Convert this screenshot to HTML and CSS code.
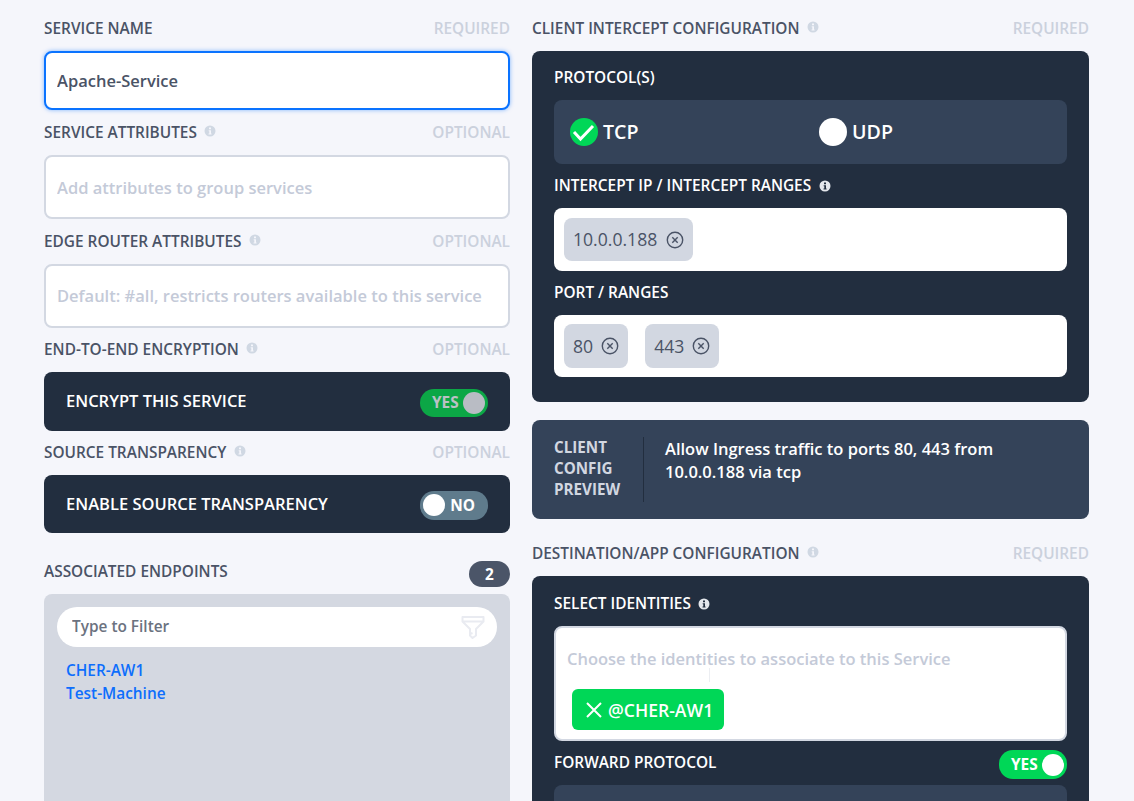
FILE: index.html
```html
<!DOCTYPE html>
<html lang="en">
<head>
<meta charset="utf-8">
<title>Service</title>
<link rel="stylesheet" href="styles.css">
</head>
<body>
<svg class="defs" width="0" height="0" aria-hidden="true">
  <symbol id="info" viewBox="0 0 12 12">
    <path fill="currentColor" fill-rule="evenodd" d="M6 .5a5.500 5.500 0 1 1 0 11 5.500 5.500 0 0 1 0-11ZM5 2.600h2v1.700H5ZM4.700 5.200H7v3.300h.6v1H4.500v-1h.8V6.200h-.6Z"/>
  </symbol>
  <symbol id="xc" viewBox="0 0 18 18">
    <circle cx="9" cy="9" r="7.700" fill="none" stroke="currentColor" stroke-width="1.400"/>
    <path d="M6.300 6.300l5.400 5.400M11.700 6.300l-5.400 5.400" fill="none" stroke="currentColor" stroke-width="1.400"/>
  </symbol>
</svg>
<main class="page">
  <section class="col col-left">
    <div class="label-row"><span class="label">SERVICE NAME</span><span class="hint">REQUIRED</span></div>
    <input class="field field-focus" type="text" value="Apache-Service">

    <div class="label-row lr-a"><span class="label">SERVICE ATTRIBUTES<svg class="info"><use href="#info"/></svg></span><span class="hint">OPTIONAL</span></div>
    <input class="field field-tall" type="text" placeholder="Add attributes to group services">

    <div class="label-row lr-a"><span class="label">EDGE ROUTER ATTRIBUTES<svg class="info"><use href="#info"/></svg></span><span class="hint">OPTIONAL</span></div>
    <input class="field field-tall field-up" type="text" placeholder="Default: #all, restricts routers available to this service">

    <div class="label-row lr-e"><span class="label">END-TO-END ENCRYPTION<svg class="info"><use href="#info"/></svg></span><span class="hint">OPTIONAL</span></div>
    <div class="dark-row">
      <span class="dark-text">ENCRYPT THIS SERVICE</span>
      <span class="toggle toggle-dim"><b>YES</b><i class="knob"></i></span>
    </div>

    <div class="label-row lr-b"><span class="label">SOURCE TRANSPARENCY<svg class="info"><use href="#info"/></svg></span><span class="hint">OPTIONAL</span></div>
    <div class="dark-row dark-row-b">
      <span class="dark-text">ENABLE SOURCE TRANSPARENCY</span>
      <span class="toggle toggle-off"><i class="knob"></i><b>NO</b></span>
    </div>

    <div class="label-row lr-c"><span class="label label-up">ASSOCIATED ENDPOINTS</span><span class="count">2</span></div>
    <div class="endpoints">
      <div class="filter">
        <input class="filter-input" type="text" placeholder="Type to Filter">
        <svg class="funnel" viewBox="0 0 24 25" width="24" height="25"><path d="M1.500 2h21v4.500L15 14v6.500L11.500 23 9 20.500V14L1.500 6.500ZM1.500 6.500h21M9 19l2.500-1" fill="none" stroke="currentColor" stroke-width="2" stroke-linejoin="round"/></svg>
      </div>
      <a class="endpoint" href="#">CHER-AW1</a>
      <a class="endpoint" href="#">Test-Machine</a>
    </div>
  </section>

  <section class="col col-right">
    <div class="label-row"><span class="label">CLIENT INTERCEPT CONFIGURATION<svg class="info"><use href="#info"/></svg></span><span class="hint">REQUIRED</span></div>
    <div class="card">
      <div class="card-label">PROTOCOL(S)</div>
      <div class="protocols">
        <div class="proto">
          <svg class="check" viewBox="0 0 28 28" width="28" height="28"><circle cx="14" cy="14" r="14" fill="#00d757"/><path d="M4 14l6.500 7L23 8" fill="none" stroke="#fff" stroke-width="3"/></svg>
          <span class="proto-text">TCP</span>
        </div>
        <div class="proto"><i class="radio"></i><span class="proto-text">UDP</span></div>
      </div>
      <div class="card-label cl-a">INTERCEPT IP / INTERCEPT RANGES<svg class="info info-light"><use href="#info"/></svg></div>
      <div class="chips chips-a"><span class="chip"><span class="chip-text">10.0.0.188</span><svg class="xc"><use href="#xc"/></svg></span></div>
      <div class="card-label cl-b">PORT / RANGES</div>
      <div class="chips chips-b">
        <span class="chip chip-s"><span class="chip-text">80</span><svg class="xc"><use href="#xc"/></svg></span>
        <span class="chip chip-s"><span class="chip-text">443</span><svg class="xc"><use href="#xc"/></svg></span>
      </div>
    </div>

    <div class="preview">
      <div class="preview-title">CLIENT<br>CONFIG<br>PREVIEW</div>
      <div class="preview-text">Allow Ingress traffic to ports 80, 443 from 10.0.0.188 via tcp</div>
    </div>

    <div class="label-row lr-d"><span class="label">DESTINATION/APP CONFIGURATION<svg class="info"><use href="#info"/></svg></span><span class="hint">REQUIRED</span></div>
    <div class="card card-dest">
      <div class="card-label">SELECT IDENTITIES<svg class="info info-light"><use href="#info"/></svg></div>
      <div class="identities">
        <div class="id-placeholder">Choose the identities to associate to this Service<i class="ibeam"></i></div>
        <span class="id-chip">
          <svg viewBox="0 0 16 16" width="16" height="16"><path d="M1 1l14 14M15 1L1 15" fill="none" stroke="#fff" stroke-width="2"/></svg>
          @CHER-AW1
        </span>
      </div>
      <div class="forward">
        <span class="card-label forward-label">FORWARD PROTOCOL</span>
        <span class="toggle toggle-on"><b>YES</b><i class="knob"></i></span>
      </div>
      <div class="forward-box"></div>
    </div>
  </section>
</main>
</body>
</html>
```
FILE: styles.css
```css
* { box-sizing: border-box; }
html, body { margin: 0; height: 801px; overflow: hidden; }
body {
  background: #f5f6fb;
  font-family: "Open Sans", "Liberation Sans", sans-serif;
  font-weight: 600;
  color: #4a5366;
}
.defs { position: absolute; }
.page {
  display: flex;
  gap: 22px;
  height: 801px;
  overflow: hidden;
  padding: 18px 45px 0 44px;
}
.col { display: flex; flex-direction: column; flex: none; }
.col-left { width: 466px; }
.col-right { width: 557px; }

.label-row {
  display: flex;
  align-items: center;
  justify-content: space-between;
  height: 20px;
  flex: none;
  margin-bottom: 13px;
}
.lr-a { margin-top: 12px; }
.lr-e { margin-top: 11px; }
.lr-b { margin-top: 11px; }
.lr-c { margin-top: 28px; margin-bottom: 7px; height: 26px; }
.lr-d { margin-top: 24px; }
.label { font-size: 15.400px; color: #4a5366; display: flex; align-items: center; white-space: nowrap; }
.label-up { padding-bottom: 6px; }
.hint { font-size: 15.400px; color: #cbd1dd; }
.info { width: 12px; height: 12px; color: #d0d8e3; margin: -2px 0 0 7.500px; flex: none; }
.info-light { color: #e4e7ec; margin-top: 0; }

.field {
  display: block;
  flex: none;
  width: 100%;
  height: 64px;
  border: 2px solid #d3d8e2;
  border-radius: 8px;
  background: #fff;
  padding: 1px 11px 0;
  font: 600 16.500px "Open Sans", "Liberation Sans", sans-serif;
  color: #4a5366;
  outline: none;
}
.field::placeholder { color: #c4cad8; opacity: 1; }
.field-focus { height: 59px; padding-top: 0; border-color: #0a73ff; box-shadow: 0 0 4px rgba(10, 115, 255, .5); }
.field-up { padding: 0 11px 1px; }

.dark-row {
  display: flex;
  flex: none;
  align-items: center;
  justify-content: space-between;
  height: 59px;
  padding: 0 22px;
  background: #222e3f;
  border-radius: 8px;
  font-size: 16.500px;
  color: #fff;
}
.dark-text { padding-bottom: 2px; }
.dark-row-b { height: 58px; }
.toggle {
  display: flex;
  align-items: center;
  justify-content: space-between;
  width: 68px;
  height: 28px;
  border-radius: 14px;
  padding: 0 3px;
  font-size: 15.400px;
  color: #fff;
}
.toggle b { font-weight: 700; }
.toggle-dim { background: #0ca746; color: #bcc1c6; padding-left: 12px; margin-top: 2px; }
.toggle-off { background: #5f7b8c; padding-right: 13px; height: 29px; margin-top: 2px; }
.toggle-on { background: #00d757; padding-left: 12px; height: 29px; }
.knob { width: 22px; height: 22px; border-radius: 50%; background: #fff; flex: none; }
.toggle-dim .knob { background: #b9bcc4; }

.count {
  width: 41px;
  height: 26px;
  border-radius: 13px;
  background: #4b5568;
  color: #fff;
  font-size: 15.400px;
  font-weight: 700;
  display: flex;
  align-items: center;
  justify-content: center;
}
.endpoints {
  height: 300px;
  flex: none;
  background: #d4d8e1;
  border-radius: 8px;
  padding: 13px 13px 0;
  display: flex;
  flex-direction: column;
  align-items: flex-start;
}
.filter {
  width: 100%;
  height: 40px;
  background: #fff;
  border-radius: 20px;
  display: flex;
  align-items: center;
  padding: 0 12px 0 15px;
  margin-bottom: 12px;
}
.filter-input {
  flex: 1;
  min-width: 0;
  border: 0;
  outline: 0;
  padding: 0 0 2px;
  background: none;
  font: 600 15.400px "Open Sans", "Liberation Sans", sans-serif;
}
.filter-input::placeholder { color: #6b7280; opacity: 1; }
.funnel { color: #e9ebf1; flex: none; }
.endpoint {
  font-size: 15.400px;
  line-height: 23px;
  color: #0d6efd;
  text-decoration: none;
  margin-left: 9px;
}

.card {
  background: #222e3f;
  border-radius: 8px;
  padding: 17px 22px 0;
  height: 351px;
  flex: none;
}
.card-dest { height: 300px; padding-top: 18px; }
.card-label {
  display: flex;
  align-items: center;
  font-size: 15.400px;
  line-height: 20px;
  height: 20px;
  color: #fff;
}
.forward-label { padding-bottom: 4px; }
.protocols {
  display: flex;
  height: 64px;
  margin-top: 12px;
  background: #344359;
  border-radius: 8px;
  padding: 0 16px;
  align-items: center;
}
.proto {
  display: flex;
  flex: none;
  align-items: center;
  gap: 5px;
  width: 249px;
  font-size: 19.600px;
  color: #fff;
}
.proto-text { padding-bottom: 2px; }
.radio { width: 28px; height: 28px; border-radius: 50%; background: #fff; flex: none; }
.check { flex: none; }
.cl-a { margin-top: 12px; }
.cl-b { margin-top: 12px; }
.chips {
  background: #fff;
  border-radius: 8px;
  display: flex;
  align-items: flex-start;
  gap: 17px;
  padding: 10px 10px 0;
  margin-top: 12px;
}
.chips-a { height: 63px; }
.chips-b { height: 62px; padding-top: 9px; }
.chip {
  height: 43px;
  background: #d2d7e1;
  border-radius: 8px;
  padding: 0 9px;
  display: flex;
  align-items: center;
  gap: 9px;
  font-size: 17.600px;
  font-weight: 500;
  color: #4a5366;
}
.chip-text { padding-bottom: 1px; }
.chip-s { height: 44px; gap: 8px; }
.xc { width: 18px; height: 18px; flex: none; color: #4a5366; }

.preview {
  display: flex;
  height: 99px;
  margin-top: 18px;
  background: #344359;
  border-radius: 8px;
  padding: 17px 22px;
  flex: none;
}
.preview-title {
  width: 90px;
  flex: none;
  border-right: 1.500px solid #222e3f;
  font-size: 15.200px;
  font-weight: 700;
  line-height: 21px;
  color: #d2d7e1;
}
.preview-text {
  padding: 0 0 0 21px;
  width: 365px;
  flex: none;
  font-size: 16.500px;
  line-height: 23px;
  color: #fff;
}
.identities {
  height: 115px;
  margin-top: 12px;
  background: #fff;
  border: 2px solid #d3d8e2;
  border-radius: 8px;
  padding: 19px 16px 0 11px;
}
.id-placeholder {
  position: relative;
  font-size: 16.500px;
  line-height: 24px;
  color: #c4cad8;
}
.ibeam {
  position: absolute;
  left: 142px;
  top: 21px;
  width: 1px;
  height: 14px;
  background: #eceef2;
}
.id-chip {
  display: inline-flex;
  align-items: center;
  gap: 6px;
  height: 41px;
  margin: 18px 0 0 5px;
  padding: 0 11px 0 14px;
  background: #00d757;
  border-radius: 6px;
  font-size: 17.600px;
  color: #fff;
}
.forward {
  display: flex;
  align-items: center;
  justify-content: space-between;
  margin-top: 9px;
}
.forward-box {
  height: 60px;
  margin-top: 6px;
  background: #344359;
  border-radius: 8px;
}
```
